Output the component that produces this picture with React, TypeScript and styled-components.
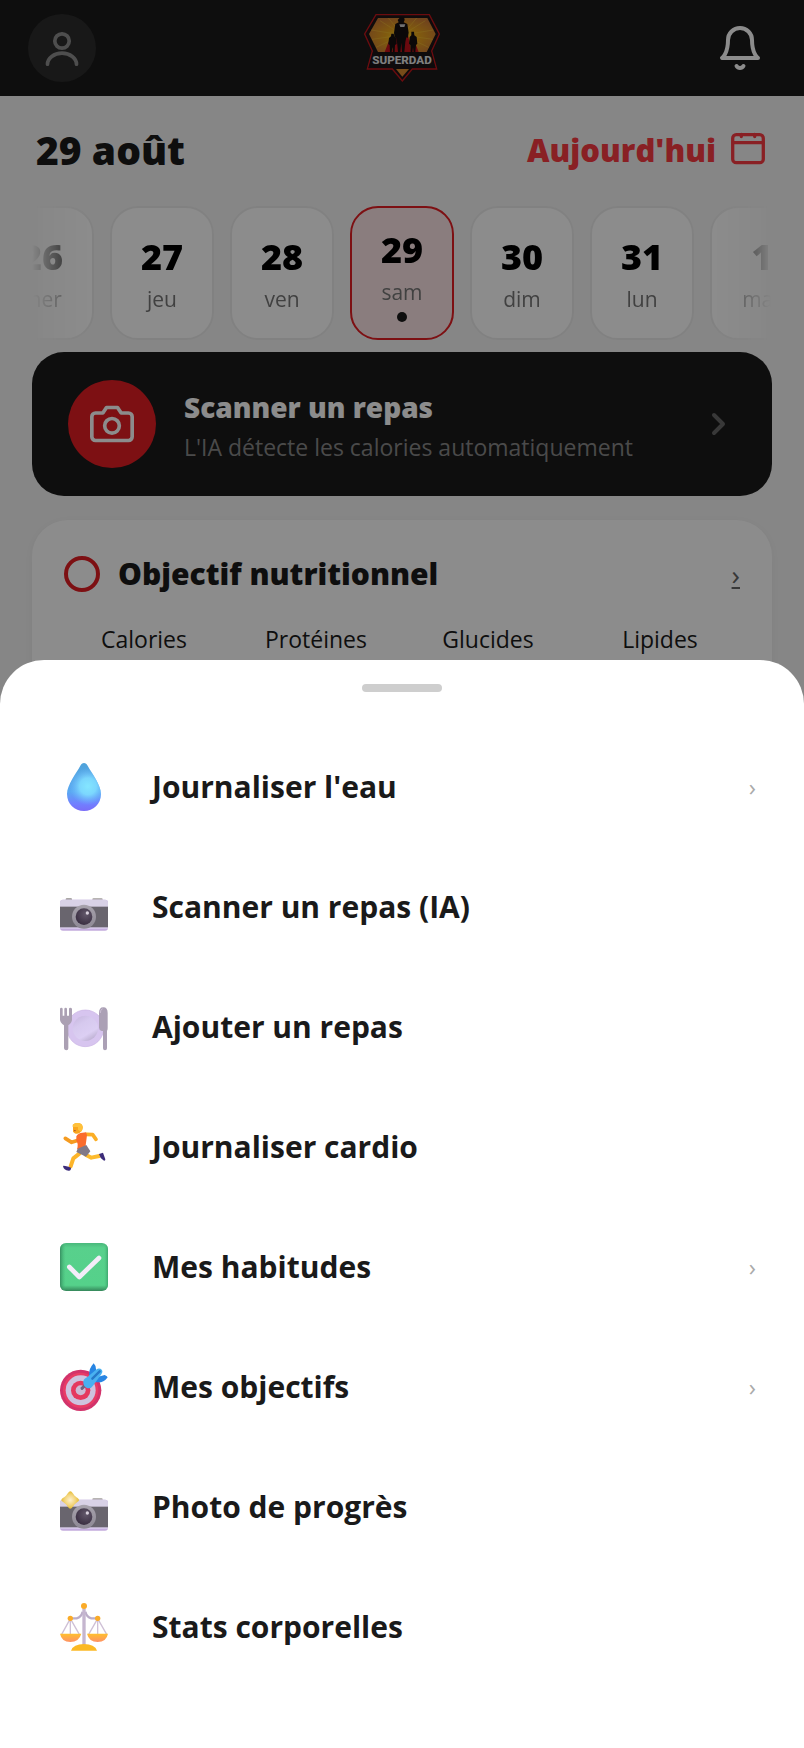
import React from "react";
import styled, { createGlobalStyle } from "styled-components";

const Global = createGlobalStyle`
  *, *::before, *::after { box-sizing: border-box; }
  body { margin: 0; background: #f5f5f5; font-family: "Open Sans", sans-serif; color: #1a1a1a; }
  button { font: inherit; color: inherit; border: 0; background: none; padding: 0; cursor: pointer; }
  svg { display: block; flex: none; }
`;

const Page = styled.div`
  min-height: 100vh;
`;

const TopBar = styled.header`
  height: 96px;
  padding: 0 40px 0 28px;
  background: #1a1a1a;
  display: grid;
  grid-template-columns: 1fr auto 1fr;
  align-items: center;
`;

const Avatar = styled.button`
  width: 68px;
  height: 68px;
  border-radius: 50%;
  background: #2c2c2c;
  color: #8e8e8e;
  display: grid;
  place-items: center;
`;

const BellButton = styled.button`
  color: #fff;
  justify-self: end;
`;

const LogoBox = styled.div`
  margin-left: 12px;
`;

const DateHeader = styled.section`
  height: 108px;
  padding: 0 38px 0 36px;
  display: flex;
  align-items: center;
  justify-content: space-between;
`;

const DateTitle = styled.h1`
  margin: 0;
  font-size: 39px;
  line-height: 52px;
  font-weight: 800;
`;

const TodayButton = styled.button`
  display: flex;
  align-items: center;
  gap: 14px;
  color: #f93b42;
  font-size: 31px;
  line-height: 40px;
  font-weight: 800;
`;

const DayStrip = styled.nav`
  margin: 0 32px;
  padding: 2px 0;
  display: flex;
  justify-content: center;
  gap: 16px;
  overflow: hidden;
  mask-image: linear-gradient(to right, transparent, #000 60px, #000 calc(100% - 60px), transparent);
`;

const DayCard = styled.button<{ $active?: boolean }>`
  flex: 0 0 104px;
  height: 134px;
  padding-top: 8px;
  border-radius: 28px;
  border: 2px solid ${(p) => (p.$active ? "#e31e24" : "#ececec")};
  background: ${(p) => (p.$active ? "#fce4e5" : "#fff")};
  display: flex;
  flex-direction: column;
  align-items: center;
  justify-content: center;
`;

const DayNumber = styled.span`
  font-size: 36px;
  line-height: 44px;
  font-weight: 800;
  color: #000;
`;

const DayName = styled.span`
  font-size: 21px;
  line-height: 40px;
  color: #777;
`;

const DayDot = styled.span`
  width: 10px;
  height: 10px;
  margin-bottom: 4px;
  border-radius: 50%;
  background: #1a1a1a;
`;

const ScanCard = styled.button`
  width: calc(100% - 64px);
  height: 144px;
  margin: 10px 32px 24px;
  padding: 0 40px 0 36px;
  border-radius: 32px;
  background: #1a1a1a;
  display: flex;
  align-items: center;
  gap: 28px;
  text-align: left;
`;

const ScanIcon = styled.span`
  flex: none;
  width: 88px;
  height: 88px;
  border-radius: 50%;
  background: #e31e24;
  color: #fff;
  display: grid;
  place-items: center;
`;

const ScanText = styled.span`
  flex: 1;
  padding-top: 6px;
  display: flex;
  flex-direction: column;
`;

const ScanTitle = styled.span`
  font-size: 28px;
  line-height: 40px;
  font-weight: 800;
  color: #fff;
`;

const ScanHint = styled.span`
  font-size: 23px;
  line-height: 40px;
  color: #888;
`;

const GoalCard = styled.section`
  margin: 0 32px;
  padding: 32px 26px 48px;
  border-radius: 36px;
  background: #fff;
  box-shadow: 0 2px 12px rgba(0, 0, 0, 0.05);
`;

const GoalHead = styled.div`
  padding: 0 6px;
  height: 44px;
  display: flex;
  align-items: center;
  gap: 18px;
`;

const Ring = styled.span`
  width: 36px;
  height: 36px;
  border: 4px solid #e31e24;
  border-radius: 50%;
`;

const GoalTitle = styled.h2`
  margin: 0;
  flex: 1;
  font-size: 30px;
  line-height: 44px;
  font-weight: 800;
`;

const GoalLink = styled.a`
  font-size: 28px;
  line-height: 44px;
  color: #666;
`;

const Macros = styled.div`
  margin-top: 23px;
  display: grid;
  grid-template-columns: repeat(4, 1fr);
  text-align: center;
  font-size: 23px;
  line-height: 40px;
`;

const Backdrop = styled.div`
  position: fixed;
  inset: 0;
  background: rgba(0, 0, 0, 0.45);
  display: flex;
  flex-direction: column;
  justify-content: flex-end;
`;

const Sheet = styled.div`
  padding: 24px 0 61px;
  border-radius: 44px 44px 0 0;
  background: #fff;
`;

const Handle = styled.div`
  width: 80px;
  height: 8px;
  margin: 0 auto 35px;
  border-radius: 4px;
  background: #cecece;
`;

const ActionRow = styled.button`
  width: 100%;
  height: 120px;
  padding: 0 48px 0 60px;
  display: flex;
  align-items: center;
  gap: 44px;
  text-align: left;
`;

const ActionLabel = styled.span`
  flex: 1;
  font-size: 30px;
  line-height: 40px;
  font-weight: 700;
`;

const ActionChevron = styled.span`
  font-size: 24px;
  line-height: 40px;
  color: #aaa;
`;

const Logo = () => (
  <svg width="76" height="68" viewBox="42 42 228 204" role="img" aria-label="Superdad">
    <defs>
      <radialGradient id="sun" cx="50%" cy="55%" r="60%">
        <stop offset="0" stopColor="#ffd21c" />
        <stop offset="0.45" stopColor="#e8a31d" />
        <stop offset="1" stopColor="#cc7a36" />
      </radialGradient>
    </defs>
    <path d="M78 44H238L268 102L245 153L260 207H187L157 243L127 207H52L67 153L44 102Z" fill="#1c1416" stroke="#c4161c" strokeWidth="4" />
    <path d="M84 54H232L257 102L230 156H84L57 102Z" fill="url(#sun)" />
    <g stroke="#f4c537" strokeWidth="3" opacity="0.5">
      <path d="M157 105L90 62M157 105L115 54M157 105L200 54M157 105L226 62M157 105L64 90M157 105L250 90M157 105L66 118M157 105L248 118M157 105L78 142M157 105L236 142" />
    </g>
    <path d="M141 92L128 156H184L172 92Z" fill="#c3121a" />
    <path d="M118 120L104 156H130ZM192 120L206 156H182Z" fill="#c3121a" />
    <path d="M152 50h10l2 10-3 7 11 5 4 26-3 16-4-2-3 14-3 30h-7l-2-28-3 28h-7l-3-30-3-14-4 2-2-16 4-26 10-5-3-7Z" fill="#150f10" />
    <path d="M124 101h7l2 8 6 5 1 18-5 3-1 21h-5l-2-14-2 14h-5l-1-21-4-3 2-18 6-5ZM184 95h8l1 11 7 5 2 20-4 4-2 21h-5l-2-14-2 14h-5l-1-21-4-4 2-20 5-5Z" fill="#150f10" />
    <path d="M148 73h18l-3 8h-12Z" fill="#ccc" />
    <path d="M69 157H243L256 204H56Z" fill="#1a1516" />
    <path d="M138 207H177L157 230Z" fill="#d98a2e" />
    <text x="156" y="193" textAnchor="middle" fontFamily="Roboto, sans-serif" fontWeight="800" fontSize="35" fill="#e8e8e8">SUPERDAD</text>
  </svg>
);

const UserIcon = () => (
  <svg width="40" height="40" viewBox="0 0 40 40" fill="none" stroke="currentColor" strokeWidth="3.7" strokeLinecap="round">
    <circle cx="20" cy="13" r="7.2" />
    <path d="M5.500 36.200A14.500 11 0 0 1 34.500 36.200" />
  </svg>
);

const BellIcon = () => (
  <svg width="48" height="48" viewBox="0 0 24 24" fill="none" stroke="currentColor" strokeWidth="2" strokeLinecap="round" strokeLinejoin="round">
    <path d="M18 8A6 6 0 0 0 6 8c0 7-3 9-3 9h18s-3-2-3-9" />
    <path d="M13.730 21a2 2 0 0 1-3.460 0" />
  </svg>
);

const CalendarIcon = () => (
  <svg width="36" height="36" viewBox="0 0 36 36" fill="none" stroke="currentColor" strokeWidth="3.3" strokeLinecap="round">
    <rect x="2.700" y="2.700" width="30.600" height="28" rx="3.5" />
    <path d="M3 10.700H33M11.300 2.500V4.500M24.700 2.500V4.500" />
  </svg>
);

const CameraIcon = () => (
  <svg width="44" height="44" viewBox="0 0 24 24" fill="none" stroke="currentColor" strokeWidth="2" strokeLinecap="round" strokeLinejoin="round">
    <path d="M23 19a2 2 0 0 1-2 2H3a2 2 0 0 1-2-2V8a2 2 0 0 1 2-2h4l2-3h6l2 3h4a2 2 0 0 1 2 2z" />
    <circle cx="12" cy="13" r="4" />
  </svg>
);

const ChevronIcon = () => (
  <svg width="24" height="28" viewBox="0 0 24 28" fill="none" stroke="#666" strokeWidth="4" strokeLinecap="round" strokeLinejoin="round">
    <path d="M6 5L15 14L6 23" />
  </svg>
);

const Art = ({ children }: { children: React.ReactNode }) => (
  <svg width="48" height="48" viewBox="0 0 144 144" aria-hidden="true">{children}</svg>
);

const DROP = "M72 0C67 0 64 3 61 8C48 32 21 66 21 93C21 123 44 144 72 144S123 123 123 93C123 66 96 32 83 8C80 3 77 0 72 0Z";

const DropArt = () => (
  <Art>
    <defs>
      <linearGradient id="drop" x1="0" y1="0" x2="0" y2="1">
        <stop offset="0" stopColor="#4fa3da" />
        <stop offset="0.600" stopColor="#5aa9f2" />
        <stop offset="0.850" stopColor="#7180ff" />
        <stop offset="1" stopColor="#7a6cf8" />
      </linearGradient>
      <radialGradient id="drop-glow" gradientUnits="userSpaceOnUse" cx="84" cy="70" r="56">
        <stop offset="0" stopColor="#84e6ff" />
        <stop offset="0.450" stopColor="#7fdcff" stopOpacity="0.900" />
        <stop offset="1" stopColor="#6fb8ff" stopOpacity="0" />
      </radialGradient>
    </defs>
    <path d={DROP} fill="url(#drop)" />
    <path d={DROP} fill="url(#drop-glow)" />
  </Art>
);

const CameraBody = ({ id }: { id: string }) => (
  <>
    <defs>
      <linearGradient id={`${id}-ring`} x1="0" y1="0" x2="0" y2="1">
        <stop offset="0" stopColor="#a7a2ac" />
        <stop offset="1" stopColor="#8d8894" />
      </linearGradient>
      <radialGradient id={`${id}-lens`} cx="0.600" cy="0.350" r="0.700">
        <stop offset="0" stopColor="#62586a" />
        <stop offset="1" stopColor="#382c40" />
      </radialGradient>
    </defs>
    <rect x="17" y="45" width="19" height="10" rx="4" fill="#aaa7a5" />
    <rect x="97" y="45" width="31" height="10" rx="4" fill="#b7b4b2" />
    <rect x="0" y="50" width="144" height="93" rx="9" fill="#c3acdd" />
    <path d="M0 59a9 9 0 0 1 9-9H135a9 9 0 0 1 9 9V72H0Z" fill="#d8d1e6" />
    <rect x="0" y="71" width="144" height="64" fill="#69656e" />
    <rect x="0" y="133" width="144" height="4" fill="#ddd0ee" />
    <circle cx="72" cy="101" r="36" fill={`url(#${id}-ring)`} />
    <circle cx="72" cy="101" r="25" fill={`url(#${id}-lens)`} />
    <circle cx="82" cy="90" r="5" fill="#d8d0dc" />
  </>
);

const CameraArt = () => (
  <Art><CameraBody id="cam" /></Art>
);

const FlashCameraArt = () => (
  <Art>
    <CameraBody id="flash" />
    <defs>
      <radialGradient id="spark">
        <stop offset="0" stopColor="#fdf0cf" />
        <stop offset="0.600" stopColor="#f3d57c" />
        <stop offset="1" stopColor="#e6bd35" />
      </radialGradient>
    </defs>
    <path d="M31 25C36 25 41 36 46 40C50 44 57 47 57 51C57 55 50 58 46 62C41 66 36 77 31 77S21 66 16 62C12 58 4 55 4 51S12 44 16 40C21 36 26 25 31 25Z" fill="url(#spark)" />
  </Art>
);

const PlateArt = () => (
  <Art>
    <defs>
      <linearGradient id="plate" x1="0.200" y1="0" x2="0.800" y2="1">
        <stop offset="0" stopColor="#c9b9e0" />
        <stop offset="0.300" stopColor="#d6c9ee" />
        <stop offset="0.700" stopColor="#dccff3" />
        <stop offset="1" stopColor="#b7aacb" />
      </linearGradient>
    </defs>
    <circle cx="76" cy="76" r="55" fill="#d7c5ef" stroke="#c8b0e4" strokeWidth="2" />
    <circle cx="76" cy="76" r="38" fill="url(#plate)" />
    <path d="M0 18q0-4 4-4t4 4V38h5V18q0-4 4-4t4 4V38h6V18q0-4 4-4t5 4V50q0 8-11 17V136q0 6-6 6t-7-6V67Q0 58 0 50Z" fill="#aba0b3" />
    <path d="M117 30q0-17 13-17t13 17V75q0 6-2 9V136q0 6-6 6t-6-6V84h-4q-8-3-8-10Z" fill="#aba0b5" />
    <path d="M121 30q0-11 7-13" stroke="#c9bdd2" strokeWidth="3" fill="none" />
  </Art>
);

const RunnerArt = () => (
  <Art>
    <g fill="none" strokeLinecap="round" strokeLinejoin="round">
      <path d="M57 51L35 58L16 46" stroke="#f59b20" strokeWidth="11" />
      <path d="M79 34L98 35L108 49" stroke="#fbae25" strokeWidth="11" />
      <path d="M59 91L40 106L32 130" stroke="#fdb52a" strokeWidth="12" />
      <path d="M77 95L94 104L118 99" stroke="#fdbb2d" strokeWidth="12" />
    </g>
    <path d="M49 40Q55 29 67 29L78 28Q82 34 80 44L76 75L51 79Q56 61 49 54Z" fill="#fb6c2c" />
    <path d="M53 77L79 66L91 85L78 101L49 87Z" fill="#817987" />
    <path d="M39 5Q50-5 64 4Q72 13 64 25Q54 37 43 30L39 26Z" fill="#f9a51f" />
    <path d="M38 5Q53-6 65 4Q73 15 63 26L54 20V12H38Z" fill="#ffc13b" />
    <path d="M42 23h5" stroke="#a84c2a" strokeWidth="3" />
    <path d="M9 129Q12 127 33 134Q33 144 26 143Q11 142 9 129ZM117 93L129 89L136 109Q136 115 130 112Q120 105 117 93Z" fill="#3c2c7a" />
  </Art>
);

const CheckArt = () => (
  <Art>
    <defs>
      <linearGradient id="check" x1="0" y1="0" x2="0" y2="1">
        <stop offset="0" stopColor="#4ab87c" />
        <stop offset="0.100" stopColor="#58d08c" />
        <stop offset="0.880" stopColor="#55d18a" />
        <stop offset="1" stopColor="#35865a" />
      </linearGradient>
      <linearGradient id="check-side">
        <stop offset="0" stopColor="#2f8057" stopOpacity="0.800" />
        <stop offset="0.120" stopColor="#42b877" stopOpacity="0" />
        <stop offset="0.920" stopColor="#42b877" stopOpacity="0" />
        <stop offset="1" stopColor="#359562" stopOpacity="0.700" />
      </linearGradient>
    </defs>
    <rect width="144" height="144" rx="18" fill="url(#check)" />
    <rect width="144" height="144" rx="18" fill="url(#check-side)" />
    <path d="M28 72L58 102L117 45" fill="none" stroke="#f3edf9" strokeWidth="14" strokeLinecap="round" strokeLinejoin="round" />
  </Art>
);

const TargetArt = () => (
  <Art>
    <circle cx="62" cy="82" r="62" fill="#d2336b" />
    <circle cx="62" cy="82" r="53" fill="#e83c66" />
    <circle cx="62" cy="82" r="45" fill="#cec3df" />
    <circle cx="62" cy="82" r="29" fill="#e5395f" />
    <circle cx="62" cy="82" r="15" fill="#cbbbd5" />
    <path d="M66 76L84 58" stroke="#71627e" strokeWidth="9" strokeLinecap="round" />
    <path d="M88 42Q84 20 101 1Q110 9 108 27L98 47ZM112 42L134 36Q145 42 142 44Q129 62 105 57Z" fill="#2785e3" />
    <path d="M70 61Q68 48 82 42L111 18Q119 14 126 21Q130 28 124 34L99 68Q91 80 79 74Q71 70 70 61Z" fill="#49b1f0" />
    <path d="M97 47L119 25" stroke="#2678c8" strokeWidth="7" strokeLinecap="round" />
  </Art>
);

const ScalesArt = () => (
  <Art>
    <defs>
      <linearGradient id="pan" x1="0" y1="0" x2="0" y2="1">
        <stop offset="0" stopColor="#ffc02d" />
        <stop offset="1" stopColor="#ff9165" />
      </linearGradient>
    </defs>
    <g fill="none" stroke="#cfc0d6" strokeWidth="4">
      <path d="M31 47L5 94M31 47V94M31 47L58 94M113 47L86 94M113 47V94M113 47L140 94" />
    </g>
    <path d="M34 46H50Q64 42 68 26M110 46H94Q80 42 76 26" fill="none" stroke="#bbadc8" strokeWidth="7" />
    <path d="M72 16V126" stroke="#c5b6cf" strokeWidth="10" />
    <circle cx="72" cy="9" r="9" fill="#faab28" />
    <circle cx="31" cy="46" r="8" fill="#faab28" />
    <circle cx="113" cy="46" r="8" fill="#faab28" />
    <path d="M0 92H64Q57 117 31 117T0 92ZM81 92H144Q139 117 113 117T81 92Z" fill="url(#pan)" />
    <path d="M33 143Q40 123 72 123T111 143Z" fill="#fbb924" />
  </Art>
);

const days = [
  { n: 26, name: "mer" },
  { n: 27, name: "jeu" },
  { n: 28, name: "ven" },
  { n: 29, name: "sam", active: true },
  { n: 30, name: "dim" },
  { n: 31, name: "lun" },
  { n: 1, name: "mar" },
];

const actions = [
  { label: "Journaliser l'eau", art: <DropArt />, more: true },
  { label: "Scanner un repas (IA)", art: <CameraArt /> },
  { label: "Ajouter un repas", art: <PlateArt /> },
  { label: "Journaliser cardio", art: <RunnerArt /> },
  { label: "Mes habitudes", art: <CheckArt />, more: true },
  { label: "Mes objectifs", art: <TargetArt />, more: true },
  { label: "Photo de progrès", art: <FlashCameraArt /> },
  { label: "Stats corporelles", art: <ScalesArt /> },
];

export default function App() {
  return (
    <>
      <Global />
      <Page>
        <TopBar>
          <Avatar aria-label="Profil"><UserIcon /></Avatar>
          <LogoBox><Logo /></LogoBox>
          <BellButton aria-label="Notifications"><BellIcon /></BellButton>
        </TopBar>
        <DateHeader>
          <DateTitle>29 août</DateTitle>
          <TodayButton>Aujourd'hui <CalendarIcon /></TodayButton>
        </DateHeader>
        <DayStrip>
          {days.map((d) => (
            <DayCard key={d.n} $active={d.active}>
              <DayNumber>{d.n}</DayNumber>
              <DayName>{d.name}</DayName>
              {d.active && <DayDot />}
            </DayCard>
          ))}
        </DayStrip>
        <ScanCard>
          <ScanIcon><CameraIcon /></ScanIcon>
          <ScanText>
            <ScanTitle>Scanner un repas</ScanTitle>
            <ScanHint>L'IA détecte les calories automatiquement</ScanHint>
          </ScanText>
          <ChevronIcon />
        </ScanCard>
        <GoalCard>
          <GoalHead>
            <Ring />
            <GoalTitle>Objectif nutritionnel</GoalTitle>
            <GoalLink href="#objectif" aria-label="Objectif nutritionnel">›</GoalLink>
          </GoalHead>
          <Macros>
            <span>Calories</span>
            <span>Protéines</span>
            <span>Glucides</span>
            <span>Lipides</span>
          </Macros>
        </GoalCard>
      </Page>
      <Backdrop>
        <Sheet role="dialog" aria-label="Actions rapides">
          <Handle />
          {actions.map((a) => (
            <ActionRow key={a.label}>
              {a.art}
              <ActionLabel>{a.label}</ActionLabel>
              {a.more && <ActionChevron>›</ActionChevron>}
            </ActionRow>
          ))}
        </Sheet>
      </Backdrop>
    </>
  );
}
